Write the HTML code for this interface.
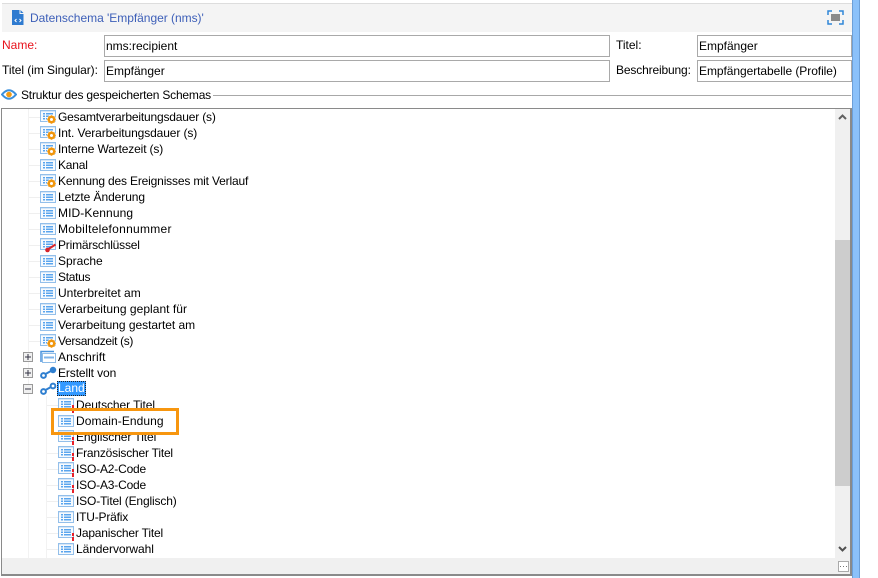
<!DOCTYPE html>
<html><head><meta charset="utf-8"><style>
html,body{margin:0;padding:0;background:#fff}
#p{position:relative;width:878px;height:578px;overflow:hidden;background:#fff;font-family:"Liberation Sans",sans-serif;font-size:12px;color:#000}
#p div,#p span,#p svg{position:absolute}
.t{white-space:nowrap;line-height:16px;height:16px}
.i{box-sizing:border-box;height:22px;background:#fff;border:1px solid #a9a9a9;line-height:20px;padding-left:1px;white-space:nowrap}
.v{width:1px;background:#f2f2f2}
.h{height:1px;background:#efefef}
</style></head><body><div id="p">
<svg width="0" height="0"><defs>
<g id="a"><rect x=".5" y=".5" width="15" height="11" fill="#f6fafe" stroke="#93bfea"/><rect x="1" y="1" width="14" height="1" fill="#d5e6f7"/><rect x="3" y="3" width="2" height="1.500" fill="#5aa5ee"/><rect x="6" y="3" width="7" height="1.500" fill="#5aa5ee"/><rect x="3" y="5.500" width="2" height="1.500" fill="#5aa5ee"/><rect x="6" y="5.500" width="7" height="1.500" fill="#5aa5ee"/><rect x="3" y="8" width="2" height="1.500" fill="#5aa5ee"/><rect x="6" y="8" width="7" height="1.500" fill="#5aa5ee"/></g>
<g id="o"><use href="#a" y="-1"/><circle cx="11.500" cy="8.500" r="4.500" fill="#fff"/><circle cx="11.500" cy="8.500" r="2.700" fill="#fff" stroke="#f0960e" stroke-width="2.400"/><path d="M11.500 4.200v1.500M11.500 11.300v1.500M7.200 8.500h1.500M14.300 8.500h1.500M8.500 5.500l1 1M13.500 10.500l1 1M14.500 5.500l-1 1M9.500 10.500l-1 1" stroke="#f0960e" stroke-width="1.400"/></g>
<g id="r"><use href="#a" y="-1"/><rect x="14" y="6" width="2" height="3" fill="#e8202a"/><rect x="14" y="10" width="2" height="4" fill="#e8202a"/></g>
<g id="k"><use href="#a" y="-1"/><path d="M15.500 5.500L8.500 10" stroke="#d8232a" stroke-width="2"/><circle cx="7.500" cy="11" r="2.300" fill="#d8232a"/></g>
<g id="l"><circle cx="3.500" cy="9.500" r="2.400" fill="none" stroke="#2f7fd0" stroke-width="2"/><circle cx="13" cy="4" r="3.200" fill="#2f7fd0"/><path d="M5.500 8L11 5" stroke="#2f7fd0" stroke-width="2"/></g>
<g id="l2"><circle cx="3.500" cy="9.500" r="2.400" fill="none" stroke="#2f7fd0" stroke-width="2"/><circle cx="13" cy="4" r="2.400" fill="#fff" stroke="#2f7fd0" stroke-width="2"/><path d="M5.500 8L11 5" stroke="#2f7fd0" stroke-width="2"/></g>
<g id="m"><use href="#a"/></g>
<g id="pl"><rect x=".5" y=".5" width="9" height="9" fill="#f0f0f0" stroke="#999"/><path d="M2 5H8M5 2V8" stroke="#334"/></g>
</defs></svg>

<div style="left:2px;top:3px;width:850px;height:1px;background:#ddd"></div>
<div style="left:2px;top:4px;width:850px;height:28px;background:#f4f4f4"></div>
<div style="left:852px;top:0;width:8px;height:578px;background:#8bc1fa;border-left:1px solid #6c9fd8;border-right:1px solid #6c9fd8;box-sizing:border-box"></div>

<svg style="left:12px;top:10px" width="12" height="15" viewBox="0 0 12 15"><path d="M0 0H7.500V4H11.500V15H0Z" fill="#2f7bd0"/><path d="M8.500 0L11.500 3H8.500Z" fill="#2f7bd0"/><path d="M4.500 9L3 10.500 4.500 12M7.500 9L9 10.500 7.500 12" fill="none" stroke="#fff"/></svg>
<div class="t" style="left:30px;top:10px;color:#3d5fb8;letter-spacing:-.03px">Datenschema 'Empfänger (nms)'</div>
<svg style="left:827px;top:10px" width="17" height="15" viewBox="0 0 17 15"><path d="M1 5V1H5M12 1H16V5M16 10V14H12M5 14H1V10" fill="none" stroke="#2f86d8" stroke-width="1.500"/><rect x="4" y="4" width="9" height="7" fill="#8a8a8a"/></svg>

<div class="t" style="left:2px;top:37px;color:#e8121c">Name:</div>
<div class="t" style="left:2px;top:62px;letter-spacing:-.05px">Titel (im Singular):</div>
<div class="t" style="left:616px;top:37px">Titel:</div>
<div class="t" style="left:616px;top:62px;letter-spacing:-.15px">Beschreibung:</div>
<div class="i" style="left:104px;top:35px;width:506px">nms:recipient</div>
<div class="i" style="left:104px;top:60px;width:506px">Empfänger</div>
<div class="i" style="left:697px;top:35px;width:155px">Empfänger</div>
<div class="i" style="left:697px;top:60px;width:155px;letter-spacing:-.06px">Empfängertabelle (Profile)</div>

<svg style="left:1px;top:88px" width="16" height="13" viewBox="0 0 16 13"><path d="M1 6.500Q8 -2 15 6.500Q8 15 1 6.500Z" fill="#fff" stroke="#3a8fdc" stroke-width="2"/><circle cx="8" cy="6.500" r="2.800" fill="#f09a14"/></svg>
<div class="t" style="left:21px;top:87px;letter-spacing:-.2px">Struktur des gespeicherten Schemas</div>
<div style="left:213px;top:95px;width:638px;height:1px;background:#a8a8a8"></div>

<div style="left:1px;top:108px;width:851px;height:468px;box-sizing:border-box;border:1px solid #8a8a8a;border-width:1px 2px 2px 1px;background:#fff"></div>
<div style="left:835px;top:109px;width:15px;height:465px;background:#f0f0f0"></div>
<div style="left:835px;top:240px;width:15px;height:246px;background:#cdcdcd"></div>
<div style="left:2px;top:558px;width:848px;height:16px;background:#f0f0f0"></div>
<svg style="left:838px;top:113px" width="9" height="8" viewBox="0 0 9 8"><path d="M1 6L4.500 2.500 8 6" fill="none" stroke="#606060" stroke-width="2"/></svg>
<svg style="left:838px;top:545px" width="9" height="8" viewBox="0 0 9 8"><path d="M1 2L4.500 5.500 8 2" fill="none" stroke="#505050" stroke-width="2"/></svg>
<div style="left:838px;top:561px;width:11px;height:11px;box-sizing:border-box;border:1px solid #aaa;background:#fff"></div>
<div style="left:840px;top:566px;width:7px;height:1px;background:repeating-linear-gradient(90deg,#777 0 1px,transparent 1px 3px)"></div>

<div class="v" style="left:28px;top:109px;height:449px"></div>
<div class="v" style="left:46px;top:396px;height:162px"></div>
<div class="h" style="left:29px;top:117px;width:11px"></div><div class="h" style="left:29px;top:133px;width:11px"></div><div class="h" style="left:29px;top:149px;width:11px"></div><div class="h" style="left:29px;top:165px;width:11px"></div><div class="h" style="left:29px;top:181px;width:11px"></div><div class="h" style="left:29px;top:197px;width:11px"></div><div class="h" style="left:29px;top:213px;width:11px"></div><div class="h" style="left:29px;top:229px;width:11px"></div><div class="h" style="left:29px;top:245px;width:11px"></div><div class="h" style="left:29px;top:261px;width:11px"></div><div class="h" style="left:29px;top:277px;width:11px"></div><div class="h" style="left:29px;top:293px;width:11px"></div><div class="h" style="left:29px;top:309px;width:11px"></div><div class="h" style="left:29px;top:325px;width:11px"></div><div class="h" style="left:29px;top:341px;width:11px"></div>
<div class="h" style="left:47px;top:405px;width:11px"></div><div class="h" style="left:47px;top:453px;width:11px"></div><div class="h" style="left:47px;top:469px;width:11px"></div><div class="h" style="left:47px;top:485px;width:11px"></div><div class="h" style="left:47px;top:501px;width:11px"></div><div class="h" style="left:47px;top:517px;width:11px"></div><div class="h" style="left:47px;top:533px;width:11px"></div><div class="h" style="left:47px;top:549px;width:11px"></div>

<svg style="left:40px;top:110px" width="18" height="16"><use href="#o" y="1"/></svg><div class="t" style="left:58px;top:109px;letter-spacing:-.18px">Gesamtverarbeitungsdauer (s)</div>
<svg style="left:40px;top:126px" width="18" height="16"><use href="#o" y="1"/></svg><div class="t" style="left:58px;top:125px;letter-spacing:-.11px">Int. Verarbeitungsdauer (s)</div>
<svg style="left:40px;top:142px" width="18" height="16"><use href="#o" y="1"/></svg><div class="t" style="left:58px;top:141px;letter-spacing:-.15px">Interne Wartezeit (s)</div>
<svg style="left:40px;top:158px" width="18" height="16"><use href="#m" y="1"/></svg><div class="t" style="left:58px;top:157px;letter-spacing:-.2px">Kanal</div>
<svg style="left:40px;top:174px" width="18" height="16"><use href="#o" y="1"/></svg><div class="t" style="left:58px;top:173px;letter-spacing:-.17px">Kennung des Ereignisses mit Verlauf</div>
<svg style="left:40px;top:190px" width="18" height="16"><use href="#m" y="1"/></svg><div class="t" style="left:58px;top:189px;letter-spacing:-.07px">Letzte Änderung</div>
<svg style="left:40px;top:206px" width="18" height="16"><use href="#m" y="1"/></svg><div class="t" style="left:58px;top:205px;letter-spacing:.1px">MID-Kennung</div>
<svg style="left:40px;top:222px" width="18" height="16"><use href="#m" y="1"/></svg><div class="t" style="left:58px;top:221px;letter-spacing:.28px">Mobiltelefonnummer</div>
<svg style="left:40px;top:238px" width="18" height="16"><use href="#k" y="1"/></svg><div class="t" style="left:58px;top:237px;letter-spacing:-.2px">Primärschlüssel</div>
<svg style="left:40px;top:254px" width="18" height="16"><use href="#m" y="1"/></svg><div class="t" style="left:58px;top:253px">Sprache</div>
<svg style="left:40px;top:270px" width="18" height="16"><use href="#m" y="1"/></svg><div class="t" style="left:58px;top:269px;letter-spacing:-.3px">Status</div>
<svg style="left:40px;top:286px" width="18" height="16"><use href="#m" y="1"/></svg><div class="t" style="left:58px;top:285px">Unterbreitet am</div>
<svg style="left:40px;top:302px" width="18" height="16"><use href="#m" y="1"/></svg><div class="t" style="left:58px;top:301px;letter-spacing:.04px">Verarbeitung geplant für</div>
<svg style="left:40px;top:318px" width="18" height="16"><use href="#m" y="1"/></svg><div class="t" style="left:58px;top:317px;letter-spacing:-.04px">Verarbeitung gestartet am</div>
<svg style="left:40px;top:334px" width="18" height="16"><use href="#o" y="1"/></svg><div class="t" style="left:58px;top:333px;letter-spacing:-.33px">Versandzeit (s)</div>

<svg style="left:23px;top:352px" width="10" height="10"><use href="#pl"/></svg>
<svg style="left:23px;top:368px" width="10" height="10"><use href="#pl"/></svg>
<svg style="left:23px;top:384px" width="10" height="10"><rect x=".5" y=".5" width="9" height="9" fill="#f0f0f0" stroke="#999"/><path d="M2 5H8" stroke="#334"/></svg>
<svg style="left:40px;top:350px" width="16" height="14"><path d="M1 12V1.500H14" fill="none" stroke="#4a94de" stroke-width="1.500"/><rect x="2.500" y="3.500" width="13" height="9" fill="#fff" stroke="#8fbde8"/><rect x="4" y="6.500" width="10" height="2" fill="#7fb4ea"/></svg>
<div class="t" style="left:58px;top:349px;letter-spacing:.1px">Anschrift</div>
<svg style="left:40px;top:366px" width="17" height="15"><use href="#l"/></svg><div class="t" style="left:58px;top:365px;letter-spacing:-.1px">Erstellt von</div>
<svg style="left:40px;top:382px" width="17" height="15"><use href="#l2"/></svg>
<div class="t" style="left:57px;top:381px;width:29px;height:15px;line-height:15px;box-sizing:border-box;background:#3399ff;color:#fff;padding-left:1px;outline:1px dotted #222;outline-offset:-1px">Land</div>

<svg style="left:58px;top:398px" width="18" height="16"><use href="#r" y="1"/></svg><div class="t" style="left:76px;top:397px;letter-spacing:-.07px">Deutscher Titel</div>
<svg style="left:58px;top:414px" width="18" height="16"><use href="#m" y="1"/></svg><div class="t" style="left:76px;top:413px;letter-spacing:.07px">Domain-Endung</div>
<svg style="left:58px;top:430px" width="18" height="16"><use href="#r" y="1"/></svg><div class="t" style="left:76px;top:429px;letter-spacing:-.07px">Englischer Titel</div>
<svg style="left:58px;top:446px" width="18" height="16"><use href="#r" y="1"/></svg><div class="t" style="left:76px;top:445px;letter-spacing:-.2px">Französischer Titel</div>
<svg style="left:58px;top:462px" width="18" height="16"><use href="#r" y="1"/></svg><div class="t" style="left:76px;top:461px;letter-spacing:-.18px">ISO-A2-Code</div>
<svg style="left:58px;top:478px" width="18" height="16"><use href="#r" y="1"/></svg><div class="t" style="left:76px;top:477px;letter-spacing:-.18px">ISO-A3-Code</div>
<svg style="left:58px;top:494px" width="18" height="16"><use href="#m" y="1"/></svg><div class="t" style="left:76px;top:493px;letter-spacing:-.15px">ISO-Titel (Englisch)</div>
<svg style="left:58px;top:510px" width="18" height="16"><use href="#m" y="1"/></svg><div class="t" style="left:76px;top:509px;letter-spacing:-.2px">ITU-Präfix</div>
<svg style="left:58px;top:526px" width="18" height="16"><use href="#r" y="1"/></svg><div class="t" style="left:76px;top:525px;letter-spacing:-.18px">Japanischer Titel</div>
<svg style="left:58px;top:542px" width="18" height="16"><use href="#m" y="1"/></svg><div class="t" style="left:76px;top:541px;letter-spacing:-.07px">Ländervorwahl</div>

<div style="left:51px;top:408px;width:128px;height:27px;box-sizing:border-box;border:3px solid #f7960f"></div>
</div></body></html>
